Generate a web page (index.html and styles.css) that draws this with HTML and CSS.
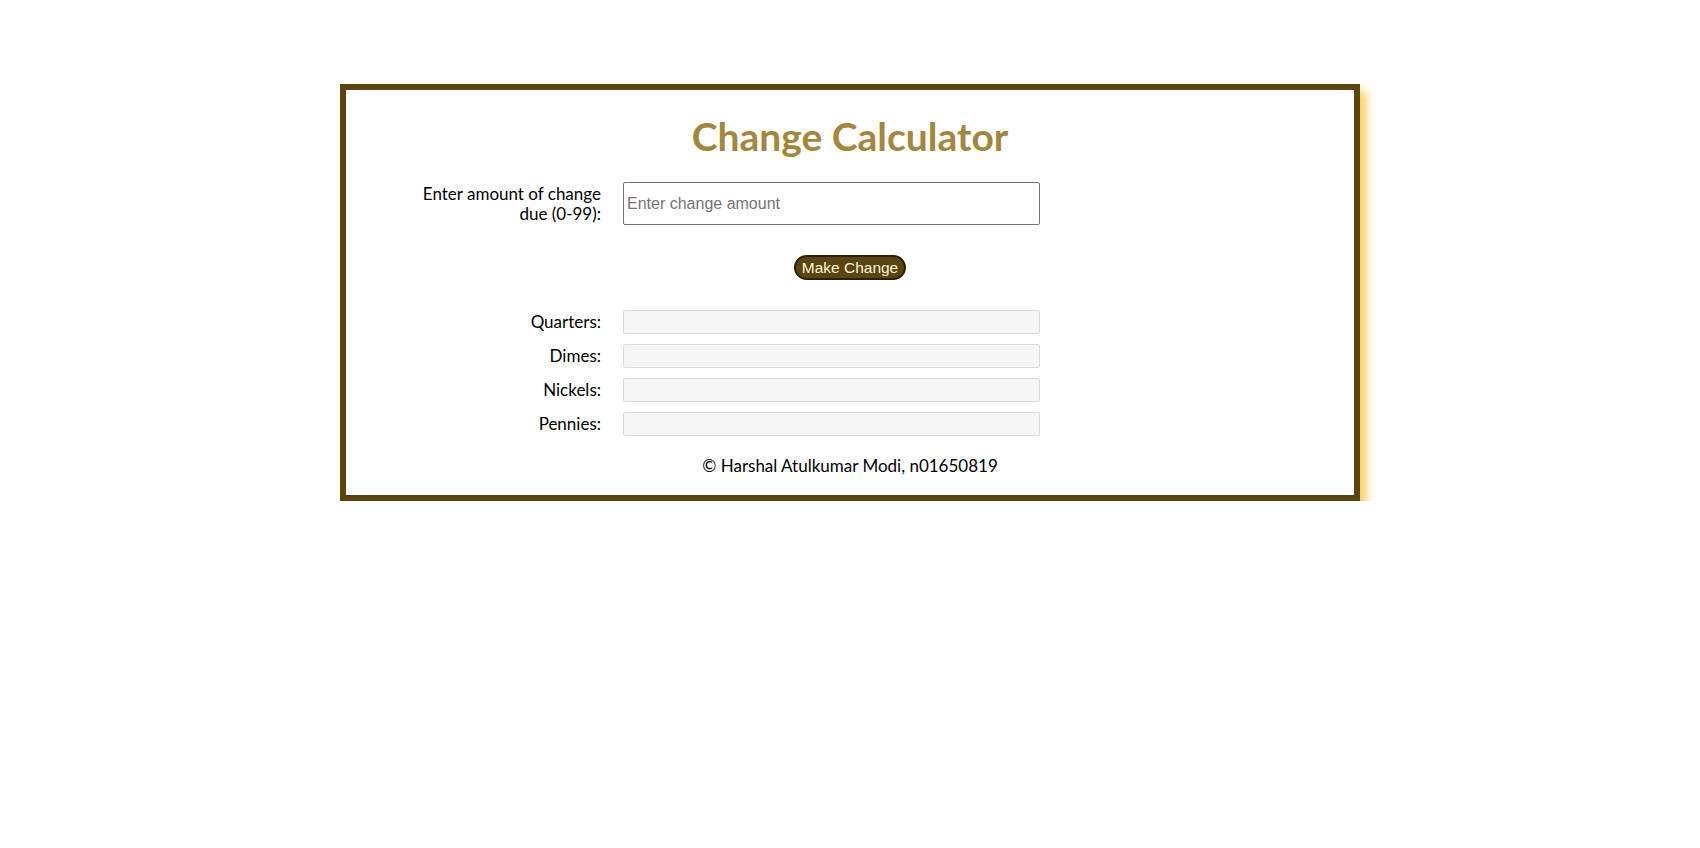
FILE: index.html
```html
<!DOCTYPE html>
<html lang="en">
<head>
<meta charset="utf-8">
<title>Change Calculator</title>
<link rel="stylesheet" href="styles.css">
</head>
<body>
<main class="card">
  <h1 class="title">Change Calculator</h1>
  <form class="form">
    <div class="row row-input">
      <label class="label" for="amount">Enter amount of change due (0-99):</label>
      <input class="amount" id="amount" type="text" placeholder="Enter change amount">
    </div>
    <div class="actions">
      <button class="btn" type="button">Make Change</button>
    </div>
    <div class="results">
      <div class="row">
        <label class="label" for="q">Quarters:</label>
        <input class="out" id="q" type="text" readonly>
      </div>
      <div class="row">
        <label class="label" for="d">Dimes:</label>
        <input class="out" id="d" type="text" readonly>
      </div>
      <div class="row">
        <label class="label" for="n">Nickels:</label>
        <input class="out" id="n" type="text" readonly>
      </div>
      <div class="row">
        <label class="label" for="p">Pennies:</label>
        <input class="out" id="p" type="text" readonly>
      </div>
    </div>
  </form>
  <p class="footer">© Harshal Atulkumar Modi, n01650819</p>
</main>
</body>
</html>
```

FILE: styles.css
```css
html, body {
  margin: 0;
  padding: 0;
  background: #ffffff;
}

body {
  padding-top: 84px;
  font-family: Lato, "Open Sans", sans-serif;
  color: #000;
}

.card {
  box-sizing: border-box;
  width: 1020px;
  height: 417px;
  margin: 0 auto;
  border: 6px solid #5a4510;
  background: #fff;
  box-shadow: 6px 7px 10px rgba(245, 200, 70, 0.9);
  display: flex;
  flex-direction: column;
}

.title {
  margin: 23px 0 0;
  text-align: center;
  font-family: Lato, sans-serif;
  font-weight: 700;
  font-size: 39px;
  line-height: 46px;
  color: #a3873c;
}

.form {
  display: flex;
  flex-direction: column;
  margin: 23px 0 0;
}

.row {
  display: grid;
  grid-template-columns: 190px 417px;
  column-gap: 22px;
  align-items: center;
  margin-left: 65px;
}

.label {
  text-align: right;
  font-size: 17px;
  line-height: 19.5px;
}

.amount {
  box-sizing: border-box;
  height: 43px;
  margin: 0;
  padding: 0 3px;
  border: 1px solid #767676;
  border-radius: 2px;
  font-family: "Liberation Sans", Arial, sans-serif;
  font-size: 16px;
  color: #000;
  background: #fff;
}

.amount::placeholder {
  color: #757575;
}

.actions {
  display: flex;
  justify-content: center;
  margin: 30px 0 30px;
}

.btn {
  box-sizing: border-box;
  width: 112px;
  height: 25px;
  padding: 0;
  border: 2px solid #2a2005;
  border-radius: 13px;
  background: #5a4510;
  color: #fbf4d8;
  font-family: "Liberation Sans", Arial, sans-serif;
  font-size: 15.5px;
  line-height: 20px;
  cursor: pointer;
}

.results {
  display: flex;
  flex-direction: column;
  gap: 10px;
}

.out {
  box-sizing: border-box;
  height: 24px;
  margin: 0;
  border: 1px solid #dcdcdc;
  border-radius: 2px;
  background: #f6f6f6;
}

.footer {
  margin: 20px 0 0;
  text-align: center;
  font-size: 17px;
  line-height: 20px;
}
```
